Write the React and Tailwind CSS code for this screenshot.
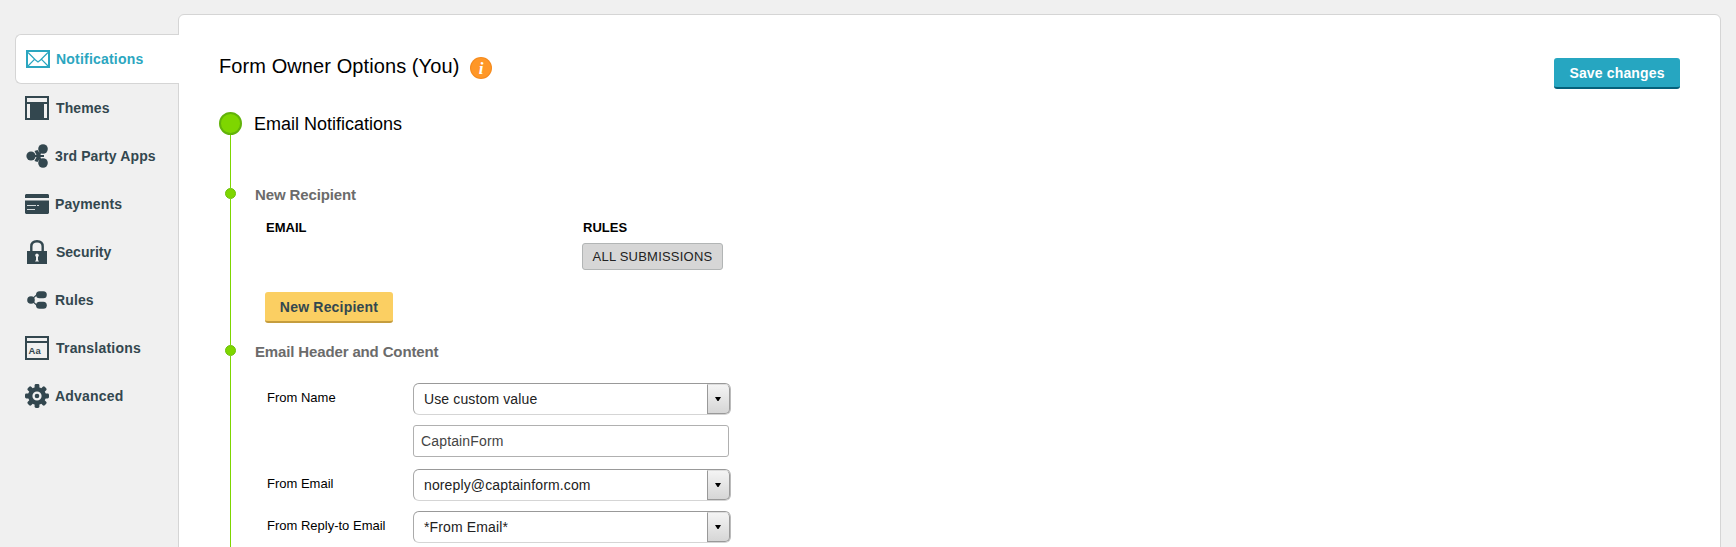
import React from 'react';

const DARK = '#33474f';

function MailIcon() {
  return (
    <svg width="24" height="18" viewBox="0 0 24 18" fill="none" stroke="#2ba6c0">
      <rect x="1" y="1" width="22" height="16" strokeWidth="2" fill="#fff" />
      <path d="M2 2.5 L9.5 10 L12 12 L14.5 10 L22 2.5 M2 16 L8.7 9.2 M22 16 L15.3 9.2" strokeWidth="1.2" />
    </svg>
  );
}

function ThemesIcon() {
  return (
    <svg width="24" height="24" viewBox="0 0 24 24" shapeRendering="crispEdges">
      <rect width="24" height="24" fill={DARK} />
      <rect x="2" y="2" width="20" height="4" fill="#f0f0f0" />
      <rect x="2" y="8" width="3" height="14" fill="#f0f0f0" />
      <rect x="19" y="8" width="3" height="14" fill="#f0f0f0" />
    </svg>
  );
}

function AppsIcon() {
  return (
    <svg width="24" height="24" viewBox="0 0 24 24" fill={DARK} stroke={DARK}>
      <path d="M13 12 L18 5 M13 12 L18 19 M6 12 H19" strokeWidth="2" />
      <path d="M9.5 7 L12.5 6 L15.5 10 V14 L12.5 18 L9.5 17 L12 12 Z" stroke="none" />
      <circle cx="6" cy="12" r="4.6" stroke="none" />
      <circle cx="18" cy="5" r="4.8" stroke="none" />
      <circle cx="18" cy="19" r="4.8" stroke="none" />
    </svg>
  );
}

function PaymentsIcon() {
  return (
    <svg width="24" height="20" viewBox="0 0 24 20">
      <path d="M1 0H23L24 1V4H0V1Z M0 6.5H24V19L23 20H1L0 19Z" fill={DARK} />
      <path d="M2 11.5H11 M12 11.5H14 M2 15.5H10" stroke="#d5dadc" strokeWidth="1" />
    </svg>
  );
}

function LockIcon() {
  return (
    <svg width="20" height="24" viewBox="0 0 20 24">
      <path d="M4.3 12V6.5C4.3 3 6.8 1.2 10 1.2S15.7 3 15.7 6.5V12" fill="none" stroke={DARK} strokeWidth="2.4" />
      <rect y="11" width="20" height="13" fill={DARK} />
      <path d="M8.2 15.5a1.8 1.8 0 1 1 3.2 1L11 17v3l1 1.5H8L9 20v-3Z" fill="#f0f0f0" />
    </svg>
  );
}

function RulesIcon() {
  return (
    <svg width="20" height="18" viewBox="0 0 20 18" fill={DARK}>
      <path d="M4 9 L10 3.5 H14 M4 9 L10 14.5 H14" fill="none" stroke={DARK} strokeWidth="1.1" />
      <circle cx="4" cy="9" r="3.8" />
      <rect x="9" y="0.2" width="10.8" height="7" rx="3.5" />
      <rect x="9" y="10.8" width="10.8" height="7" rx="3.5" />
    </svg>
  );
}

function TranslationsIcon() {
  return (
    <svg width="24" height="24" viewBox="0 0 24 24">
      <rect x="1" y="1" width="22" height="22" fill="none" stroke={DARK} strokeWidth="2" />
      <rect x="2" y="5" width="20" height="2" fill={DARK} />
      <text x="3.6" y="18" fontSize="9.4" fontWeight="bold" fontFamily="Liberation Sans, sans-serif" fill={DARK}>Aa</text>
    </svg>
  );
}

function GearIcon() {
  const angles = [0, 45, 90, 135, 180, 225, 270, 315];
  return (
    <svg width="24" height="24" viewBox="0 0 24 24" fill={DARK}>
      {angles.map((a) => (
        <rect key={a} x="9.6" y="0" width="4.8" height="6" rx="1.4" transform={`rotate(${a} 12 12)`} />
      ))}
      <circle cx="12" cy="12" r="6.8" fill="none" stroke={DARK} strokeWidth="4.4" />
      <circle cx="12" cy="12" r="2.3" />
    </svg>
  );
}

function InfoIcon() {
  return (
    <svg width="22" height="22" viewBox="0 0 22 22">
      <circle cx="11" cy="11" r="11" fill="#f58a1c" />
      <circle cx="11" cy="11" r="10" fill="#ff9727" />
      <text x="11" y="16.5" textAnchor="middle" fontSize="17" fontWeight="bold" fontStyle="italic" fontFamily="Liberation Serif, serif" fill="#fff">i</text>
    </svg>
  );
}

const items = [
  { label: 'Themes', Icon: ThemesIcon, gap: 'pl-[7px]' },
  { label: '3rd Party Apps', Icon: AppsIcon, gap: 'pl-1.5' },
  { label: 'Payments', Icon: PaymentsIcon, gap: 'pl-1.5' },
  { label: 'Security', Icon: LockIcon, gap: 'pl-[7px] tracking-normal' },
  { label: 'Rules', Icon: RulesIcon, gap: 'pl-1.5' },
  { label: 'Translations', Icon: TranslationsIcon, gap: 'pl-[7px] tracking-[0.2px]' },
  { label: 'Advanced', Icon: GearIcon, gap: 'pl-1.5 tracking-[0.2px]' },
];

function Sidebar() {
  return (
    <nav className="z-10 mt-[34px] ml-[15px] -mr-px w-[164px] shrink-0 text-sm font-bold tracking-[0.12px] text-[#33474f]">
      <div className="flex h-[50px] items-center rounded-l-md border border-r-0 border-[#d5d5d5] bg-white pl-2.5 text-[#2ba6c0]">
        <MailIcon />
        <span className="pl-1.5 tracking-[0.2px]">Notifications</span>
      </div>
      {items.map(({ label, Icon, gap }) => (
        <div key={label} className="flex h-12 items-center pl-2.5">
          <span className="flex w-6 justify-center"><Icon /></span>
          <span className={gap}>{label}</span>
        </div>
      ))}
    </nav>
  );
}

function Section({ big, height, children }) {
  return (
    <section className={`flex ${height}`}>
      <div className="flex w-[23px] shrink-0 flex-col items-center">
        <div className={big
          ? 'size-[23px] shrink-0 rounded-full border-2 border-[#62b30a] bg-[#7ed600]'
          : 'size-[11px] shrink-0 rounded-full border border-[#6cc00a] bg-[#7ed600]'} />
        <div className="w-px flex-1 bg-[#7ed600]" />
      </div>
      <div className="flex-1">{children}</div>
    </section>
  );
}

function Select({ value }) {
  return (
    <div className="flex h-8 w-[318px] rounded-md border border-t-[#999] border-r-[#bbb] border-b-[#d5d5d5] border-l-[#aaa] bg-white">
      <span className="flex-1 pl-2.5 text-sm leading-[31px] tracking-[0.13px] text-[#222]">{value}</span>
      <span className="flex h-[30px] w-[23px] items-center justify-center rounded-r-[5px] border border-t-[#ddd] border-[#999] bg-linear-to-b from-[#f4f4f4] to-[#d6d6d6] pr-0.5">
        <svg width="6" height="4" viewBox="0 0 6 4"><path d="M0 0H6L3.5 4H2.5Z" fill="#000" /></svg>
      </span>
    </div>
  );
}

function Field({ label, margin, children }) {
  return (
    <div className={`flex ${margin}`}>
      <span className="w-[146px] pt-[7px] text-[13px] leading-4 text-black">{label}</span>
      {children}
    </div>
  );
}

export default function App() {
  return (
    <div className="flex h-[547px] overflow-hidden bg-[#f0f0f0] font-['Liberation_Sans',Arial,sans-serif]">
      <Sidebar />
      <main className="mt-3.5 h-[560px] w-[1543px] shrink-0 rounded-t-md border border-[#d5d5d5] bg-white pl-10">
        <header className="flex h-[97px] items-start pr-10">
          <h1 className="mt-[39px] text-xl leading-6 tracking-[0.09px] text-black">Form Owner Options (You)</h1>
          <span className="mt-[42px] ml-[11px]"><InfoIcon /></span>
          <button className="mt-[43px] ml-auto h-[31px] w-[126px] rounded-[3px] border-b-2 border-[#04607a] bg-[#26a6c1] text-sm font-bold tracking-[0.15px] text-white">Save changes</button>
        </header>
        <Section big height="h-[76px]">
          <h2 className="pl-3 text-lg leading-6 text-black">Email Notifications</h2>
        </Section>
        <Section height="h-[157px]">
          <h3 className="-mt-px pl-[13px] text-[15px] leading-4 font-bold tracking-[-0.12px] text-[#6b6b6b]">New Recipient</h3>
          <div className="mt-[17px] flex pl-[23px] text-[13px] leading-4 text-black">
            <div className="w-[317px] pl-px font-bold">EMAIL</div>
            <div>
              <div className="pl-px font-bold">RULES</div>
              <div className="mt-[7px] h-[27px] w-[141px] rounded-[3px] border border-[#b2b5b5] bg-[#d6d6d6] text-center leading-[25px] tracking-[0.22px] text-[#222]">ALL SUBMISSIONS</div>
            </div>
          </div>
          <button className="mt-[22px] ml-[23px] h-[31px] w-32 rounded-[3px] border-b-2 border-[#c59d3e] bg-[#fbcf62] text-sm font-bold tracking-[0.2px] text-[#33474f]">New Recipient</button>
        </Section>
        <Section height="h-[210px]">
          <h3 className="-mt-px pl-[13px] text-[15px] leading-4 font-bold tracking-[-0.14px] text-[#6b6b6b]">Email Header and Content</h3>
          <div className="mt-[23px] pl-[25px]">
            <Field label="From Name"><Select value="Use custom value" /></Field>
            <div className="mt-2.5 ml-[146px] h-8 w-[316px] rounded-[3px] border border-[#b0b0b0] bg-white pl-[7px] text-sm leading-[31px] tracking-[0.15px] text-[#444]">CaptainForm</div>
            <Field label="From Email" margin="mt-3"><Select value="noreply@captainform.com" /></Field>
            <Field label="From Reply-to Email" margin="mt-2.5"><Select value="*From Email*" /></Field>
          </div>
        </Section>
      </main>
    </div>
  );
}
